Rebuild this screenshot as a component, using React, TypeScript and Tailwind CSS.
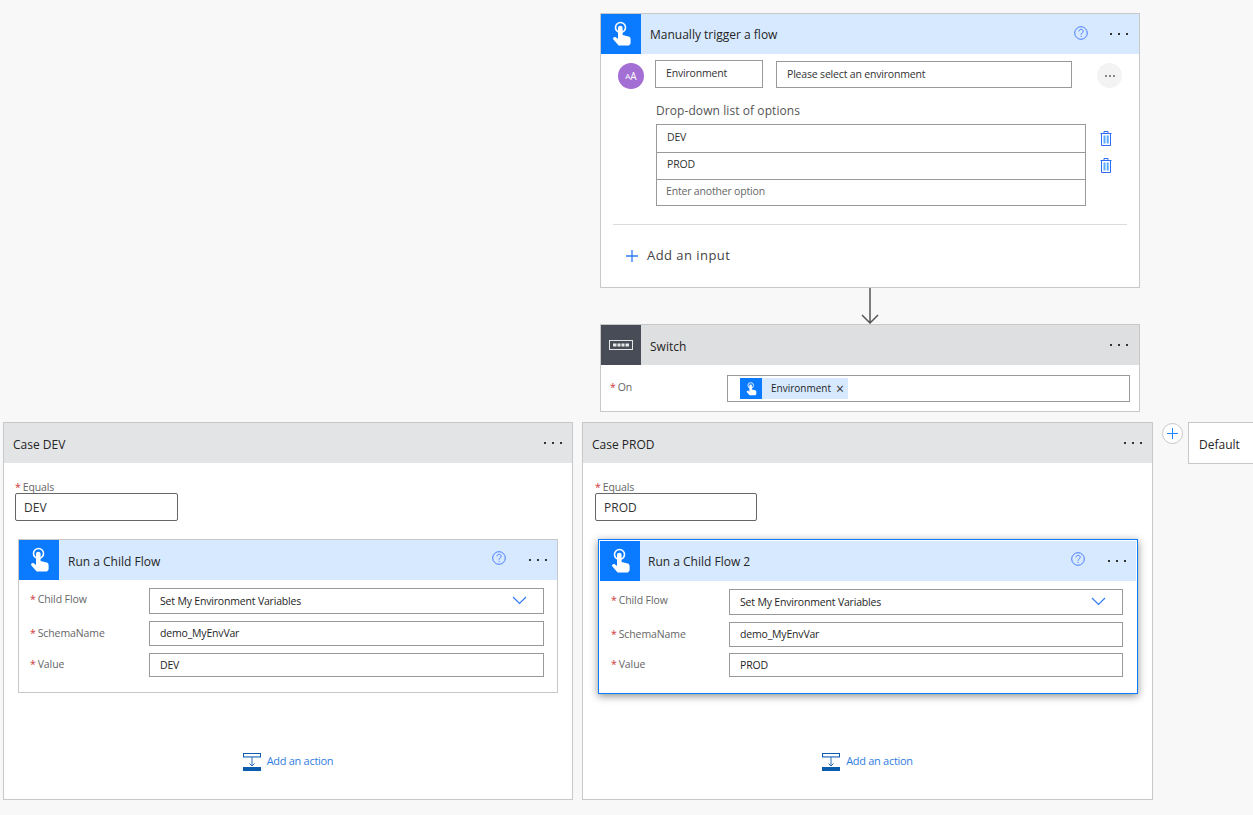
import React from "react";

const font = "font-['Open_Sans','Noto_Sans',sans-serif]";
const inputText = "text-[10.5px] tracking-[-0.18px]";

function TouchIcon({ className }: { className?: string }) {
  return (
    <svg viewBox="0 0 40 40" className={className}>
      <circle cx="19.5" cy="13.5" r="5" fill="none" stroke="#fff" strokeWidth="1.6" />
      <path
        d="M17 14c0-3 4.6-3 4.6 0v7l6 1.4c1.4.3 2 1.2 2 2.6v4.5l-1.6 2H17.6l-5.4-6.2c-.8-1.4 1.2-3 2.6-2l2.2 1.6z"
        fill="#fff"
      />
    </svg>
  );
}

function IconBox({ children }: { children: React.ReactNode }) {
  return <div className="w-10 h-10 shrink-0 bg-[#0a7bff]">{children}</div>;
}

function Dots() {
  return (
    <svg width="18" height="4" viewBox="0 0 18 4" className="shrink-0">
      <rect x="0" y="1" width="2" height="2" fill="#333" />
      <rect x="8" y="1" width="2" height="2" fill="#333" />
      <rect x="16" y="1" width="2" height="2" fill="#333" />
    </svg>
  );
}

function Help() {
  return (
    <svg width="14" height="14" viewBox="0 0 14 14" className="shrink-0 -mt-[3px]">
      <circle cx="7" cy="7" r="6.3" fill="none" stroke="#4a7dff" strokeWidth="1" />
      <path d="M5 5.3c0-2.6 4.2-2.6 4.2 0 0 1.6-2.1 1.6-2.1 3.4" fill="none" stroke="#4a7dff" strokeWidth="1" />
      <rect x="6.6" y="9.9" width="1" height="1" fill="#4a7dff" />
    </svg>
  );
}

function Trash() {
  return (
    <svg width="12" height="15" viewBox="0 0 12 15">
      <path d="M0.5 2.5h11M4 2.5V.5h4v2M1.5 2.5v12h9v-12" fill="none" stroke="#2f6cf5" strokeWidth="1" />
      <rect x="3.5" y="4.5" width="2" height="8" fill="#5aa9ff" />
      <rect x="6.7" y="4.5" width="2" height="8" fill="#5aa9ff" />
    </svg>
  );
}

function Chevron() {
  return (
    <svg width="15" height="9" viewBox="0 0 15 9" className="shrink-0">
      <path d="M1 1l6.5 6.5L14 1" fill="none" stroke="#2f7bf5" strokeWidth="1.2" />
    </svg>
  );
}

function AddAction() {
  return (
    <div className="flex items-center justify-center gap-[6px]">
      <svg width="18" height="18" viewBox="0 0 18 18">
        <rect x="0.5" y="0.5" width="17" height="3.4" fill="#fff" stroke="#0b5cad" />
        <path d="M0 4.5h18" stroke="#8fb2dc" strokeWidth="1" />
        <path d="M9 4v9M6.5 10.5L9 13l2.5-2.5" fill="none" stroke="#2b6cb5" strokeWidth="1" />
        <rect x="0" y="14" width="18" height="4" fill="#0b5cad" />
      </svg>
      <span className="text-[11px] text-[#2f7de1] tracking-[-0.3px]">Add an action</span>
    </div>
  );
}

function Label({ text }: { text: string }) {
  return (
    <div className="text-[10.5px] tracking-[-0.1px] leading-none text-[#666]">
      <span className="text-[#d13438] mr-[2px]">*</span>
      {text}
    </div>
  );
}

function Field({ text, select, h }: { text: string; select?: boolean; h: string }) {
  return (
    <div className={`flex items-center justify-between flex-1 border border-[#999] pl-[10px] pr-[16px] text-[#252525] bg-white ${inputText} ${h}`}>
      <span className="pt-[2px]">{text}</span>
      {select ? <Chevron /> : null}
    </div>
  );
}

function ChildCard({ title, value, selected }: { title: string; value: string; selected?: boolean }) {
  const labelCol = selected ? "w-[118px]" : "w-[119px]";
  return (
    <div
      className={
        selected
          ? "mt-[18px] ml-[15px] mr-[14px] h-[155px] border border-[#0a7bff] bg-white shadow-[0_2px_8px_rgba(0,0,0,0.45)] p-[1px]"
          : "mt-[18px] mx-[14px] h-[154px] border border-[#c8c8c8] bg-white"
      }
    >
      <div className="flex items-center h-10 bg-[#d6e9ff]">
        <IconBox>
          <TouchIcon />
        </IconBox>
        <div className={`flex-1 text-[12px] text-[#252525] ${selected ? "pl-[8px] pt-[2px]" : "pl-[9px] pt-[4px]"}`}>{title}</div>
        <Help />
        <div className="ml-[23px] mr-[10px]">
          <Dots />
        </div>
      </div>
      <div className="flex flex-col pl-[11px] pr-[13px] pt-[8px]">
        <div className="flex items-center">
          <div className={`${labelCol} pb-[2px]`}>
            <Label text="Child Flow" />
          </div>
          <Field text="Set My Environment Variables" select h="h-[26px]" />
        </div>
        <div className="flex items-center mt-[7px]">
          <div className={labelCol}>
            <Label text="SchemaName" />
          </div>
          <Field text="demo_MyEnvVar" h="h-[25px]" />
        </div>
        <div className={`flex items-center ${selected ? "mt-[6px]" : "mt-[7px]"}`}>
          <div className={labelCol}>
            <Label text="Value" />
          </div>
          <Field text={value} h="h-[24px]" />
        </div>
      </div>
    </div>
  );
}

function CaseCard({
  title,
  equals,
  childTitle,
  selected,
  width,
}: {
  title: string;
  equals: string;
  childTitle: string;
  selected?: boolean;
  width: string;
}) {
  return (
    <div className={`h-[378px] shrink-0 border border-[#c8c8c8] bg-white ${width}`}>
      <div className="flex items-center justify-between h-10 bg-[#e3e4e6] pl-[9px] pr-[10px]">
        <span className="pt-[4px] text-[12px] text-[#252525]">{title}</span>
        <Dots />
      </div>
      <div className={`pt-[19px] ${selected ? "pl-[12px]" : "pl-[11px]"}`}>
        <Label text="Equals" />
        <div className={`flex items-center h-[28px] border border-[#666] rounded-[2px] pl-[8px] pt-[2px] text-[12px] text-[#333] ${selected ? "w-[162px]" : "w-[163px]"}`}>
          {equals}
        </div>
      </div>
      <ChildCard title={childTitle} value={equals} selected={selected} />
      <div className={selected ? "mt-[59px]" : "mt-[60px]"}>
        <AddAction />
      </div>
    </div>
  );
}

export default function App() {
  return (
    <div className={`h-[815px] overflow-hidden bg-[#f8f8f8] pt-[13px] ${font}`}>
      <div className="ml-[600px] w-[540px]">
        {/* trigger */}
        <div className="h-[275px] border border-[#c8c8c8] bg-white">
          <div className="flex items-center h-10 bg-[#d6e9ff]">
            <IconBox>
              <TouchIcon />
            </IconBox>
            <div className="flex-1 pl-[9px] pt-[2px] text-[12px] text-[#252525]">Manually trigger a flow</div>
            <Help />
            <div className="ml-[22px] mr-[11px]">
              <Dots />
            </div>
          </div>
          <div className="flex items-start pl-[17px] pr-[17px] mt-[6px]">
            <div className="flex items-center justify-center mt-[3px] w-[26px] h-[26px] rounded-full bg-[#a46fd4] text-[10px] text-white">
              <span className="text-[8px]">A</span>A
            </div>
            <div className={`ml-[11px] w-[108px] h-[28px] border border-[#999] pl-[10px] pb-[1px] flex items-center text-[#333] ${inputText}`}>
              Environment
            </div>
            <div className={`ml-[13px] mt-[1px] w-[296px] h-[27px] border border-[#999] pl-[10px] flex items-center text-[#333] ${inputText}`}>
              Please select an environment
            </div>
            <div className="ml-[25px] mt-[3px] flex items-center justify-center w-[25px] h-[25px] rounded-full bg-[#f3f3f3]">
              <svg width="10" height="2" viewBox="0 0 10 2">
                <path d="M0 0h2v2H0zM4 0h2v2H4zM8 0h2v2H8z" fill="#888" />
              </svg>
            </div>
          </div>
          <div className="ml-[55px] mt-[13px] text-[12px] tracking-[0.08px] text-[#555]">Drop-down list of options</div>
          <div className="flex ml-[55px] mt-[4px]">
            <div className="w-[430px] border border-[#999]">
              <div className={`flex items-center h-[27px] pl-[10px] pb-[1px] text-[#333] ${inputText}`}>DEV</div>
              <div className={`flex items-center h-[27px] pl-[10px] pb-[2px] text-[#333] border-t border-[#999] ${inputText}`}>PROD</div>
              <div className={`flex items-center h-[26px] pl-[9px] pb-[2px] text-[#666] border-t border-[#999] ${inputText}`}>Enter another option</div>
            </div>
            <div className="flex flex-col ml-[14px] pt-[7px] gap-[12px]">
              <Trash />
              <Trash />
            </div>
          </div>
          <div className="mx-[12px] mt-[18px] border-t border-[#dcdcdc]" />
          <div className="flex items-center ml-[25px] mt-[21px]">
            <svg width="12" height="12" viewBox="0 0 12 12">
              <path d="M6 0v12M0 6h12" stroke="#2f7bf5" strokeWidth="1.3" />
            </svg>
            <span className="ml-[9px] text-[13px] text-[#444] tracking-[0.45px]">Add an input</span>
          </div>
        </div>

        {/* connector */}
        <div className="flex justify-center h-[36px]">
          <svg width="18" height="36" viewBox="0 0 18 36">
            <path d="M9 0v35M1 27l8 8 8-8" fill="none" stroke="#555" strokeWidth="1.5" />
          </svg>
        </div>

        {/* switch */}
        <div className="h-[88px] border border-[#c8c8c8] bg-white">
          <div className="flex items-center h-10 bg-[#dedfe0]">
            <div className="flex items-center justify-center w-10 h-10 pr-[1px] bg-[#474c56]">
              <svg width="24" height="10" viewBox="0 0 24 10">
                <rect x="0.5" y="0.5" width="23" height="9" fill="none" stroke="#e8e8e8" />
                <rect x="4" y="3.5" width="16" height="3" fill="#e8e8e8" />
                <path d="M8 3v4M12 3v4M16 3v4" stroke="#474c56" />
              </svg>
            </div>
            <div className="flex-1 pl-[9px] pt-[4px] text-[12px] text-[#252525]">Switch</div>
            <div className="mr-[11px]">
              <Dots />
            </div>
          </div>
          <div className="flex items-center pl-[9px] pr-[9px] mt-[10px]">
            <div className="w-[117px] pb-[3px]">
              <Label text="On" />
            </div>
            <div className="flex items-center flex-1 h-[27px] border border-[#999] pl-[12px]">
              <div className="flex items-center h-[21px] pr-[4px] bg-[#d6e9ff]">
                <div className="w-[22px] h-[21px] bg-[#0a7bff]">
                  <TouchIcon />
                </div>
                <span className="ml-[9px] text-[10px] text-[#252525]">Environment</span>
                <span className="ml-[5px] text-[14px] leading-none text-[#333]">×</span>
              </div>
            </div>
          </div>
        </div>
      </div>

      {/* cases */}
      <div className="flex mt-[10px] pl-[3px] w-[1300px]">
        <CaseCard title="Case DEV" equals="DEV" childTitle="Run a Child Flow" width="w-[570px]" />
        <div className="ml-[9px]">
          <CaseCard title="Case PROD" equals="PROD" childTitle="Run a Child Flow 2" selected width="w-[571px]" />
        </div>
        <div className="flex items-center justify-center ml-[9px] mt-[1px] w-[21px] h-[21px] rounded-full border border-[#c8c8c8] bg-white">
          <svg width="11" height="11" viewBox="0 0 11 11">
            <path d="M5.5 0v11M0 5.5h11" stroke="#1a86ff" strokeWidth="1" />
          </svg>
        </div>
        <div className="flex items-center ml-[5px] w-[80px] h-[42px] border border-[#c8c8c8] bg-white pl-[10px] pt-[4px] text-[12px] text-[#252525]">
          Default
        </div>
      </div>
    </div>
  );
}
